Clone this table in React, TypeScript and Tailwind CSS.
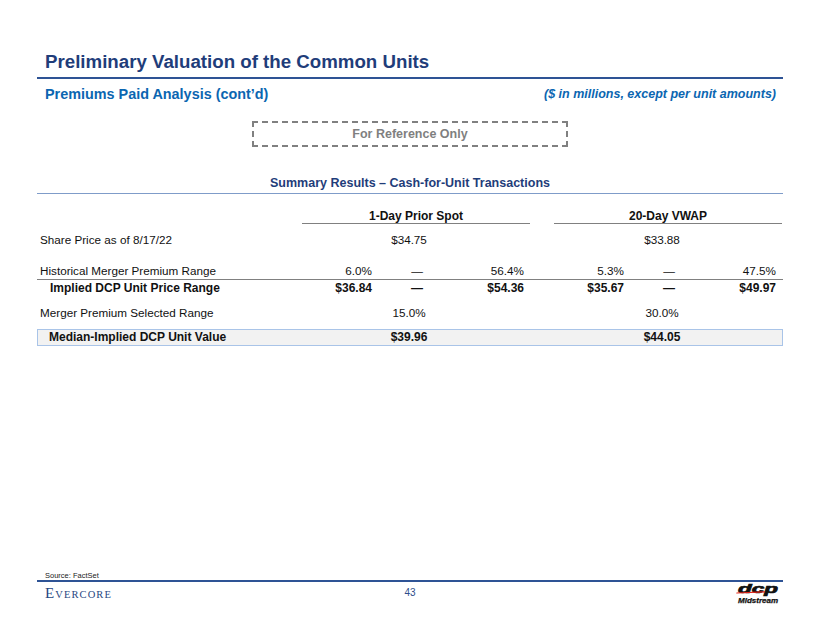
import React from 'react';

const GRID = 'grid grid-cols-[265px_70px_90px_62px_30px_70px_90px_62px_6px] items-center';

type RangeRowProps = {
  label: string;
  bold?: boolean;
  vals: [string, string, string, string];
  className?: string;
};

const RangeRow: React.FC<RangeRowProps> = ({ label, bold, vals, className }) => (
  <div
    className={`${GRID} h-[14px] leading-[14px] ${bold ? 'font-bold text-[12px]' : 'text-[11.7px]'} ${className ?? ''}`}
  >
    <div className={bold ? 'pl-[13px]' : 'pl-[3px]'}>{label}</div>
    <div className="text-right">{vals[0]}</div>
    <div className="text-center">—</div>
    <div className="text-right">{vals[1]}</div>
    <div />
    <div className="text-right">{vals[2]}</div>
    <div className="text-center">—</div>
    <div className="text-right">{vals[3]}</div>
    <div />
  </div>
);

type SingleRowProps = {
  label: string;
  bold?: boolean;
  a: string;
  b: string;
  className?: string;
};

const SingleRow: React.FC<SingleRowProps> = ({ label, bold, a, b, className }) => (
  <div className={`${GRID} ${bold ? 'font-bold text-[12px]' : 'text-[11.7px]'} ${className ?? ''}`}>
    <div className={bold ? 'pl-[12px]' : 'pl-[3px]'}>{label}</div>
    <div className="col-span-3 text-center pr-[8px]">{a}</div>
    <div />
    <div className="col-span-3 text-center pr-[6px]">{b}</div>
    <div />
  </div>
);

const DcpLogo: React.FC = () => (
  <svg width="46" height="23" viewBox="0 0 46 23" className="block">
    <text
      x="2"
      y="11"
      fontFamily="'Liberation Sans', Arial, sans-serif"
      fontSize="13"
      fontWeight="700"
      fontStyle="italic"
      textLength="40"
      lengthAdjust="spacingAndGlyphs"
      fill="#111"
      stroke="#111"
      strokeWidth="0.7"
    >
      dcp
    </text>
    <path d="M0.5 10.4 L29 9.2 L28.5 10.6 L0.2 11.6 Z" fill="#e2231a" />
    <text
      x="2"
      y="21"
      fontFamily="'Liberation Sans', Arial, sans-serif"
      fontSize="7.5"
      fontWeight="700"
      fontStyle="italic"
      textLength="40"
      lengthAdjust="spacingAndGlyphs"
      fill="#111"
      stroke="#111"
      strokeWidth="0.25"
    >
      Midstream
    </text>
  </svg>
);

export default function App() {
  return (
    <div className="w-[820px] h-[634px] bg-white flex flex-col px-[37px] pt-[51px] pb-[29px] font-['Liberation_Sans',Arial,sans-serif] text-[#111]">
      {/* title */}
      <div className="border-b-2 border-[#2e5395] pb-[4px]">
        <h1 className="pl-[8px] text-[18.7px] leading-[22px] font-bold text-[#1f3d7a]">
          Preliminary Valuation of the Common Units
        </h1>
      </div>

      <div className="flex justify-between items-start mt-[6px]">
        <h2 className="pl-[8px] text-[14.4px] leading-[18px] font-bold text-[#0b66b1]">
          Premiums Paid Analysis (cont’d)
        </h2>
        <p className="pr-[7px] pt-[1px] text-[12.5px] leading-[16px] font-bold italic text-[#0b66b1]">
          ($ in millions, except per unit amounts)
        </p>
      </div>

      <div className="mx-auto mt-[18px] w-[316px] h-[26px] border-2 border-dashed border-[#808080] flex items-center justify-center">
        <span className="text-[12.5px] leading-[15px] font-bold text-[#7f7f7f]">For Reference Only</span>
      </div>

      {/* summary table */}
      <div className="mt-[29px] border-b border-[#7f9cc9] pb-[2px] text-center text-[12.5px] leading-[15px] font-bold text-[#1f3d7a]">
        Summary Results – Cash-for-Unit Transactions
      </div>

      <div>
        <div className="flex mt-[15px] text-[12px] font-bold leading-[14px]">
          <div className="w-[265px]" />
          <div className="w-[228px] text-center border-b border-[#808080]">1-Day Prior Spot</div>
          <div className="w-[24px]" />
          <div className="w-[228px] text-center border-b border-[#808080]">20-Day VWAP</div>
        </div>

        <SingleRow label="Share Price as of 8/17/22" a="$34.75" b="$33.88" className="mt-[9px] leading-[14px]" />

        <div className="mt-[17px] border-b border-[#808080] pb-[1px]">
          <RangeRow label="Historical Merger Premium Range" vals={['6.0%', '56.4%', '5.3%', '47.5%']} />
        </div>
        <RangeRow
          label="Implied DCP Unit Price Range"
          bold
          vals={['$36.84', '$54.36', '$35.67', '$49.97']}
          className="mt-[1px]"
        />

        <SingleRow label="Merger Premium Selected Range" a="15.0%" b="30.0%" className="mt-[11px] leading-[14px]" />

        <div className="mt-[9px] border border-[#a9c4e8] bg-[#f2f2f2]">
          <SingleRow label="Median-Implied DCP Unit Value" bold a="$39.96" b="$44.05" className="leading-[15px] -mx-px" />
        </div>
      </div>

      {/* footer */}
      <div className="mt-auto">
        <p className="pl-[8px] text-[7.5px] leading-[9px] text-[#222]">Source: FactSet</p>
        <div className="border-b-2 border-[#2e5395]" />
        <div className="grid grid-cols-[1fr_auto_1fr] h-[23px] items-start">
          <div className="pl-[8px] pt-[3px] font-['Liberation_Serif',serif] text-[#27467f] leading-[16px] tracking-[1.1px]">
            <span className="text-[15px]">E</span>
            <span className="text-[10.5px]">VERCORE</span>
          </div>
          <div className="pt-[5px] text-[10px] leading-[12px] text-[#2e4d8a]">43</div>
          <div className="justify-self-end pr-[1px]">
            <DcpLogo />
          </div>
        </div>
      </div>
    </div>
  );
}
